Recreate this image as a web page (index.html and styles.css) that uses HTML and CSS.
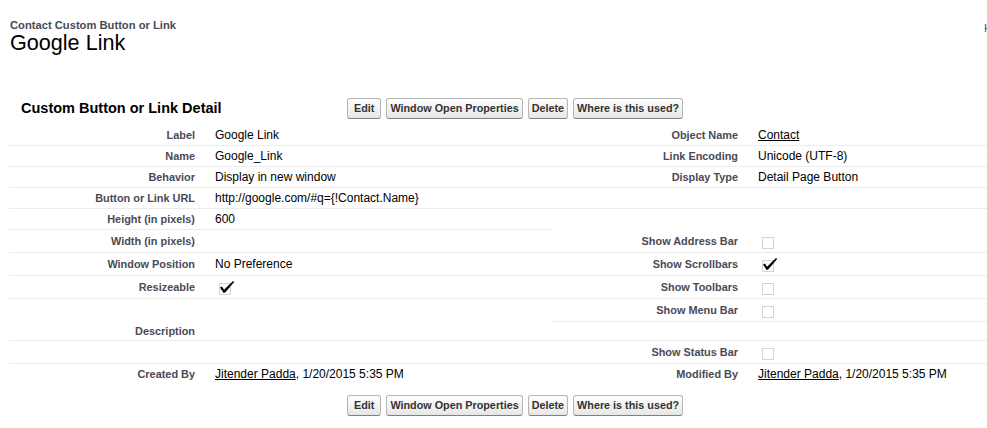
FILE: index.html
```html
<!DOCTYPE html>
<html>
<head>
<meta charset="utf-8">
<title>Google Link</title>
<link rel="stylesheet" href="styles.css">
</head>
<body>
<div class="page">
  <div class="header">
    <div class="header-text">
      <h2 class="page-type">Contact Custom Button or Link</h2>
      <h1 class="page-title">Google Link</h1>
    </div>
    <a class="help" href="#">Help for this Page</a>
  </div>

  <div class="block">
    <div class="block-bar">
      <h3 class="block-title">Custom Button or Link Detail</h3>
      <div class="buttons">
        <button class="btn">&nbsp;Edit&nbsp;</button>
        <button class="btn">Window Open Properties</button>
        <button class="btn">Delete</button>
        <button class="btn">Where is this used?</button>
      </div>
    </div>

    <table class="detail">
      <colgroup>
        <col class="c-label">
        <col class="c-data">
        <col class="c-label2">
        <col class="c-data2">
      </colgroup>
      <tbody>
        <tr>
          <td class="label">Label</td>
          <td class="data">Google Link</td>
          <td class="label">Object Name</td>
          <td class="data"><a class="link" href="#">Contact</a></td>
        </tr>
        <tr>
          <td class="label">Name</td>
          <td class="data">Google_Link</td>
          <td class="label">Link Encoding</td>
          <td class="data">Unicode (UTF-8)</td>
        </tr>
        <tr>
          <td class="label">Behavior</td>
          <td class="data">Display in new window</td>
          <td class="label">Display Type</td>
          <td class="data">Detail Page Button</td>
        </tr>
        <tr>
          <td class="label">Button or Link URL</td>
          <td class="data">http://google.com/#q={!Contact.Name}</td>
          <td class="label"></td>
          <td class="data"></td>
        </tr>
        <tr>
          <td class="label">Height (in pixels)</td>
          <td class="data">600</td>
          <td class="label noline"></td>
          <td class="data noline"></td>
        </tr>
        <tr>
          <td class="label">Width (in pixels)</td>
          <td class="data"></td>
          <td class="label">Show Address Bar</td>
          <td class="data"><svg class="cb" viewBox="0 0 16 14" width="16" height="14"><rect x="0.5" y="2.5" width="11" height="11" fill="none" stroke="#a8a8a8" stroke-dasharray="1 1"/></svg></td>
        </tr>
        <tr>
          <td class="label">Window Position</td>
          <td class="data">No Preference</td>
          <td class="label">Show Scrollbars</td>
          <td class="data"><svg class="cb" viewBox="0 0 16 14" width="16" height="14"><rect x="0.5" y="2.5" width="11" height="11" fill="none" stroke="#a8a8a8" stroke-dasharray="1 1"/><path d="M1 6.6 L3 5.6 L5 8.8 L13.8 0.2 L15.4 0.8 L6.2 11.6 L4.6 12 Z" fill="#000"/></svg></td>
        </tr>
        <tr>
          <td class="label">Resizeable</td>
          <td class="data"><svg class="cb" viewBox="0 0 16 14" width="16" height="14"><rect x="0.5" y="2.5" width="11" height="11" fill="none" stroke="#a8a8a8" stroke-dasharray="1 1"/><path d="M1 6.6 L3 5.6 L5 8.8 L13.8 0.2 L15.4 0.8 L6.2 11.6 L4.6 12 Z" fill="#000"/></svg></td>
          <td class="label">Show Toolbars</td>
          <td class="data"><svg class="cb" viewBox="0 0 16 14" width="16" height="14"><rect x="0.5" y="2.5" width="11" height="11" fill="none" stroke="#a8a8a8" stroke-dasharray="1 1"/></svg></td>
        </tr>
        <tr>
          <td class="label noline"></td>
          <td class="data noline"></td>
          <td class="label">Show Menu Bar</td>
          <td class="data"><svg class="cb" viewBox="0 0 16 14" width="16" height="14"><rect x="0.5" y="2.5" width="11" height="11" fill="none" stroke="#a8a8a8" stroke-dasharray="1 1"/></svg></td>
        </tr>
        <tr>
          <td class="label">Description</td>
          <td class="data"></td>
          <td class="label"></td>
          <td class="data"></td>
        </tr>
        <tr>
          <td class="label"></td>
          <td class="data"></td>
          <td class="label">Show Status Bar</td>
          <td class="data"><svg class="cb" viewBox="0 0 16 14" width="16" height="14"><rect x="0.5" y="2.5" width="11" height="11" fill="none" stroke="#a8a8a8" stroke-dasharray="1 1"/></svg></td>
        </tr>
        <tr class="last">
          <td class="label">Created By</td>
          <td class="data"><a class="link" href="#">Jitender Padda</a>, 1/20/2015 5:35 PM</td>
          <td class="label">Modified By</td>
          <td class="data"><a class="link" href="#">Jitender Padda</a>, 1/20/2015 5:35 PM</td>
        </tr>
      </tbody>
    </table>

    <div class="block-bar foot">
      <div class="spacer"></div>
      <div class="buttons">
        <button class="btn">&nbsp;Edit&nbsp;</button>
        <button class="btn">Window Open Properties</button>
        <button class="btn">Delete</button>
        <button class="btn">Where is this used?</button>
      </div>
    </div>
  </div>
</div>
</body>
</html>
```

FILE: styles.css
```css
html, body {
  margin: 0;
  padding: 0;
  overflow: hidden;
  background: #fff;
}

body {
  font-family: "Liberation Sans", Arial, sans-serif;
  font-size: 12px;
  color: #000;
}

.page {
  width: 1089px;
  padding-left: 9px;
}

.header {
  display: grid;
  grid-template-columns: 975px auto;
  align-items: start;
}

.header-text {
  padding-left: 1px;
  padding-top: 18px;
}

.page-type {
  margin: 0;
  font-size: 11.2px;
  line-height: 14px;
  font-weight: bold;
  color: #4a4a56;
}

.page-title {
  margin: 0;
  font-size: 21.6px;
  line-height: 21px;
  font-weight: normal;
  color: #000;
}

.help {
  padding-top: 21px;
  font-size: 10.8px;
  line-height: 14px;
  color: #015ba7;
  text-decoration: none;
  white-space: nowrap;
}

.block {
  margin-top: 45px;
}

.block-bar {
  display: grid;
  grid-template-columns: 338px auto;
  align-items: center;
  height: 21px;
}

.block-bar.foot {
  margin-top: 10px;
}

.block-title {
  margin: 0;
  padding-left: 12px;
  font-size: 14.5px;
  line-height: 21px;
  font-weight: bold;
  color: #000;
  white-space: nowrap;
}

.buttons {
  display: flex;
  gap: 5px;
}

.btn {
  margin: 0;
  height: 21px;
  padding: 3px 3px;
  font-family: "Liberation Sans", Arial, sans-serif;
  font-size: 10.8px;
  line-height: 13px;
  font-weight: bold;
  color: #333;
  border: 1px solid #b5b5b5;
  border-bottom-color: #7f7f7f;
  border-radius: 3px;
  background: linear-gradient(#ffffff, #f3f3f3 50%, #e6e6e6);
  white-space: nowrap;
}

.detail {
  margin-top: 6px;
  width: 1089px;
  table-layout: fixed;
  border-collapse: separate;
  border-spacing: 0;
}

.c-label { width: 196px; }
.c-data { width: 348px; }
.c-label2 { width: 195px; }
.c-data2 { width: 350px; }

.detail td {
  padding-top: 3px;
  padding-bottom: 3px;
  border-bottom: 1px solid #ececec;
  vertical-align: middle;
}

.detail td.noline,
.detail tr.last td {
  border-bottom-color: transparent;
}

.label {
  padding-left: 2px;
  padding-right: 10px;
  text-align: right;
  font-size: 10.9px;
  line-height: 12px;
  font-weight: bold;
  color: #4a4a56;
}

.data {
  padding-left: 10px;
  padding-right: 2px;
  text-align: left;
  font-size: 12px;
  line-height: 14px;
  color: #000;
}

.link {
  color: #000;
  text-decoration: underline;
}

.cb {
  display: block;
  margin-top: 2px;
  margin-left: 4px;
}
```
